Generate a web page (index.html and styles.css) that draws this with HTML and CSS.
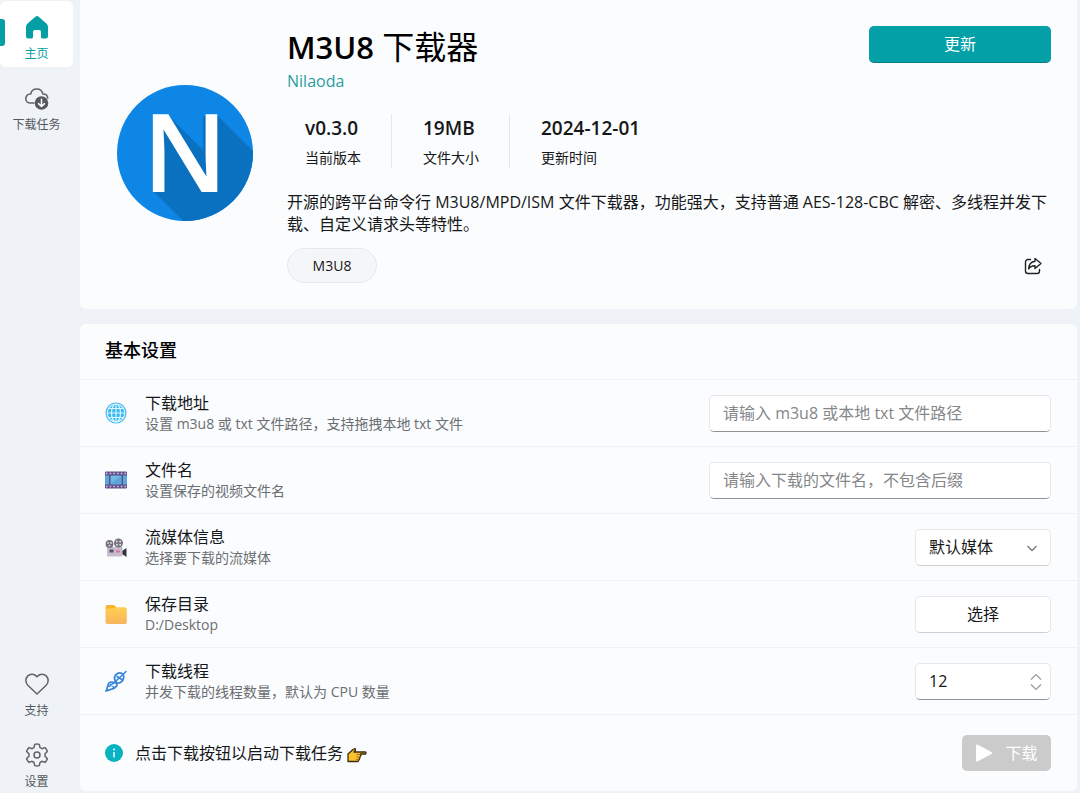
FILE: index.html
```html
<!DOCTYPE html>
<html lang="zh-CN">
<head>
<meta charset="utf-8">
<meta name="viewport" content="width=device-width, initial-scale=1">
<title>M3U8 下载器</title>
<link rel="stylesheet" href="styles.css">
</head>
<body>
<div class="app">
  <nav class="sidebar">
    <div class="nav-group">
      <a class="nav-item active" href="#home">
        <svg width="26" height="26" viewBox="0 0 26 26"><path d="M13 2 Q13.9 2 14.6 2.7 L22.4 9.6 Q24 11 24 13 V22 Q24 24.500 21.500 24.500 H18.500 Q17 24.500 17 23 V18 Q17 16 15 16 H11 Q9 16 9 18 V23 Q9 24.500 7.500 24.500 H4.500 Q2 24.500 2 22 V13 Q2 11 3.600 9.600 L11.400 2.700 Q12.100 2 13 2Z" fill="#049fa5"/></svg>
        <span>主页</span>
      </a>
      <a class="nav-item" href="#tasks">
        <svg width="26" height="26" viewBox="0 0 26 26" fill="none" stroke="#606368" stroke-width="1.600" stroke-linecap="round" stroke-linejoin="round"><path d="M10 18H6.500a4.500 4.500 0 0 1-.4-9h.5a6.300 6.300 0 0 1 12.300 0h.5a4.400 4.400 0 0 1 4.300 4"/><circle cx="17.500" cy="18" r="6.800" fill="#56595d" stroke="none"/><path d="M17.500 14.300v7.200M14.500 18.600l3 2.900 3-2.900" stroke="#fff" stroke-width="1.500"/></svg>
        <span>下载任务</span>
      </a>
    </div>
    <div class="nav-group bottom">
      <a class="nav-item" href="#support">
        <svg width="26" height="26" viewBox="0 0 26 26" fill="none" stroke="#606368" stroke-width="1.500" stroke-linejoin="round"><path d="M13 5.800C10.500 2.400 6.200 2.500 3.800 4.900c-2.700 2.700-2.500 6.700 0 9.300L13 23l9.200-8.800c2.500-2.600 2.700-6.600 0-9.300C19.800 2.500 15.500 2.400 13 5.800Z"/></svg>
        <span>支持</span>
      </a>
      <a class="nav-item" href="#settings">
        <svg width="26" height="26" viewBox="0 0 26 26" fill="none" stroke="#606368" stroke-width="1.500" stroke-linejoin="round"><path d="M10.700 2.400Q13 1.700 15.300 2.400L16 5.600Q17 6 17.900 6.700L21 5.600Q22.700 7.200 23.400 9.500L21 11.800Q21.200 13 21 14.200L23.400 16.500Q22.700 18.800 21 20.400L17.900 19.300Q17 20 16 20.400L15.300 23.600Q13 24.300 10.700 23.600L10 20.400Q9 20 8.100 19.300L5 20.400Q3.300 18.800 2.600 16.500L5 14.200Q4.800 13 5 11.800L2.600 9.500Q3.300 7.200 5 5.600L8.100 6.700Q9 6 10 5.600Z"/><circle cx="13" cy="13" r="3"/></svg>
        <span>设置</span>
      </a>
    </div>
  </nav>

  <main class="content">
    <section class="card hero">
      <svg class="logo" viewBox="0 0 136 136" role="img" aria-label="N">
        <defs><clipPath id="disc"><circle cx="68" cy="68" r="68"/></clipPath></defs>
        <circle cx="68" cy="68" r="68" fill="#0d86e6"/>
        <path clip-path="url(#disc)" d="M36 106H46V42L52 31 86 65V31H101L200 130V200H130Z" fill="#0a70c0"/>
        <text class="logo-letter" x="68" y="107" text-anchor="middle">N</text>
      </svg>
      <div class="hero-body">
        <div class="hero-top">
          <div>
            <h1><span class="latin">M3U8</span> 下载器</h1>
            <a class="author" href="#author">Nilaoda</a>
          </div>
          <button class="btn-primary" type="button">更新</button>
        </div>
        <dl class="stats">
          <div class="stat"><dd>v0.3.0</dd><dt>当前版本</dt></div>
          <div class="stat"><dd>19MB</dd><dt>文件大小</dt></div>
          <div class="stat"><dd>2024-12-01</dd><dt>更新时间</dt></div>
        </dl>
        <p class="desc">开源的跨平台命令行 M3U8/MPD/ISM 文件下载器，功能强大，支持普通 AES-128-CBC 解密、多线程并发下载、自定义请求头等特性。</p>
        <div class="hero-foot">
          <button class="tag" type="button">M3U8</button>
          <button class="share" type="button" aria-label="分享">
            <svg width="18" height="18" viewBox="0 0 18 18" fill="none" stroke="#222" stroke-width="1.400" stroke-linecap="round" stroke-linejoin="round"><path d="M6.500 2.500H4A2.500 2.500 0 0 0 1.500 5v9A2.500 2.500 0 0 0 4 16.500h9a2.500 2.500 0 0 0 2.500-2.500v-1.500"/><path d="M11 1.500 17 6.500 11 11.500V8.800C8 8.700 6 9.800 4.700 12 4.900 7.500 7.500 4.600 11 4.200Z"/></svg>
          </button>
        </div>
      </div>
    </section>

    <section class="card settings">
      <h2>基本设置</h2>
      <div class="row">
        <svg class="row-icon" viewBox="0 0 22 22"><circle cx="11" cy="11" r="10.500" fill="#3db7ee"/><g fill="none" stroke="#d9f5ff" stroke-width="1.200"><ellipse cx="11" cy="11" rx="4.500" ry="9"/><path d="M11 2v18M2 11h18M3.500 6.500h15M3.500 15.500h15"/><circle cx="11" cy="11" r="8.800"/></g></svg>
        <div class="row-text"><label for="url">下载地址</label><small>设置 m3u8 或 txt 文件路径，支持拖拽本地 txt 文件</small></div>
        <input class="field wide" id="url" type="text" placeholder="请输入 m3u8 或本地 txt 文件路径">
      </div>
      <div class="row">
        <svg class="row-icon" viewBox="0 0 22 22"><rect x="0" y="2.500" width="22" height="17" rx="1" fill="#63508c"/><path d="M0 6.500h4v9H0zM5.500 6.500h11v9h-11zM18 6.500h4v9h-4z" fill="#5ba7dc"/><path d="M6 7h10L6 14z" fill="#74b8e4"/><path d="M1 4.500h20M1 17.500h20" stroke="#d5cbe8" stroke-width="1.500" stroke-dasharray="1.500 2.200"/></svg>
        <div class="row-text"><label for="name">文件名</label><small>设置保存的视频文件名</small></div>
        <input class="field wide" id="name" type="text" placeholder="请输入下载的文件名，不包含后缀">
      </div>
      <div class="row">
        <svg class="row-icon" viewBox="0 0 22 22"><path d="M17 15l4.500-3v9L17 18z" fill="#37333e"/><rect x="2" y="11" width="15.500" height="9.500" rx="1" fill="#c5bccd"/><path d="M4.500 13.500h4v3h-4z" fill="#5a4f6b"/><path d="M11 14.500h4v2h-4z" fill="#e0709a"/><circle cx="4.500" cy="8" r="3.900" fill="#77717d"/><circle cx="13.500" cy="7" r="4.500" fill="#77717d"/><g fill="#dedbe1"><circle cx="3" cy="7" r=".9"/><circle cx="6" cy="7" r=".9"/><circle cx="4.500" cy="9.700" r=".9"/><circle cx="11.800" cy="5.500" r="1"/><circle cx="15.200" cy="5.500" r="1"/><circle cx="12" cy="8.800" r="1"/><circle cx="15.200" cy="8.800" r="1"/></g></svg>
        <div class="row-text"><label for="media">流媒体信息</label><small>选择要下载的流媒体</small></div>
        <div class="control">
          <select class="field" id="media"><option>默认媒体</option></select>
          <svg class="adorn" width="12" height="20" viewBox="0 0 12 20" fill="none" stroke="#777" stroke-width="1.300"><path d="M1.500 8 6 12.500 10.500 8"/></svg>
        </div>
      </div>
      <div class="row">
        <svg class="row-icon" viewBox="0 0 22 22"><defs><linearGradient id="fold" x1="0" y1="0" x2="0" y2="1"><stop offset="0" stop-color="#ffd24d"/><stop offset="1" stop-color="#f9b45f"/></linearGradient></defs><path d="M.5 4Q.5 2 2.500 2H8Q9 2 9.800 2.800L11.500 4.200H20Q21.800 4.200 21.800 6V19Q21.800 21 20 21H2.500Q.5 21 .5 19Z" fill="url(#fold)"/><path d="M1 3.500Q1.500 2 2.500 2H8Q9 2 9.800 2.800L11 4 8.500 5.500H1Z" fill="#f7b52c"/></svg>
        <div class="row-text"><label for="folder">保存目录</label><small>D:/Desktop</small></div>
        <button class="field pick" id="folder" type="button">选择</button>
      </div>
      <div class="row">
        <svg class="row-icon" viewBox="0 0 22 22" fill="none" stroke="#3a84d8" stroke-width="1.800" stroke-linecap="round"><path d="M1 21C3 18.500 2 14 4.500 12.500 8 10.500 11.500 15 15.500 12.500 19.500 10 19.500 5 17 3.500 14 2 10 4 9.500 7.500 9 11 13.500 13 11.500 16 9 20 4.500 19 1 21"/><path d="M4 16.500C7 14 9 13 11 11S15.500 7 21 1.500M12 6.500l5.500 3.500M5.500 14.500 9 17.500" stroke-width="1.500"/></svg>
        <div class="row-text"><label for="threads">下载线程</label><small>并发下载的线程数量，默认为 CPU 数量</small></div>
        <div class="control">
          <input class="field strong" id="threads" type="number" value="12" min="1">
          <svg class="adorn spin" width="12" height="20" viewBox="0 0 12 20" fill="none" stroke="#999" stroke-width="1.200"><path d="M1 7.500 6 2.500 11 7.500M1 12.500 6 17.500 11 12.500"/></svg>
        </div>
      </div>
      <div class="row last">
        <svg class="info" viewBox="0 0 18 18"><circle cx="9" cy="9" r="9" fill="#05b4c0"/><circle cx="9" cy="5.500" r="1" fill="#fff"/><path d="M9 8v5.500" stroke="#fff" stroke-width="1.400"/></svg>
        <p class="tip">点击下载按钮以启动下载任务
          <svg class="hand" width="20" height="16" viewBox="0 0 20 16"><path d="M1 14.500V7L6 2.500 8 1.500 8.500 3 7 5H18.500Q19.500 6 18.500 7H13.500L14 8.500 13 10 12.500 12 11 14.500Z" fill="#fcc12b" stroke="#3a2c12" stroke-width="1.300" stroke-linejoin="round"/><path d="M9.500 7.500h4M9.500 10H13M9 12.300h3" stroke="#8a5d12" stroke-width=".8"/></svg>
        </p>
        <button class="download" type="button" disabled>
          <svg width="18" height="20" viewBox="0 0 18 20"><path d="M2 2.500V17.500L16 10Z" fill="#fff" stroke="#fff" stroke-width="2" stroke-linejoin="round"/></svg>
          <span>下载</span>
        </button>
      </div>
    </section>
  </main>
</div>
</body>
</html>
```
FILE: styles.css
```css
* {
  box-sizing: border-box;
}

body {
  margin: 0;
  background: #eff3f8;
  color: #161718;
  font-family: "Open Sans", "Noto Sans CJK SC", sans-serif;
  font-size: 16px;
  line-height: 22px;
}

button,
input,
select {
  font: inherit;
  color: inherit;
}

h1,
h2,
p,
dl,
dd {
  margin: 0;
}

a {
  text-decoration: none;
}

.app {
  display: flex;
  min-height: 100vh;
}

.sidebar {
  flex: 0 0 80px;
  display: flex;
  flex-direction: column;
  justify-content: space-between;
  padding: 1px 7px 0 0;
}

.nav-group {
  display: flex;
  flex-direction: column;
  gap: 5px;
}

.nav-item {
  position: relative;
  display: flex;
  flex-direction: column;
  align-items: center;
  gap: 4px;
  height: 66px;
  padding-top: 13px;
  border-radius: 6px;
  color: #55585c;
  font-size: 12px;
  line-height: 20px;
}

.nav-group.bottom {
  gap: 7px;
}

.bottom .nav-item {
  height: 64px;
}

.nav-item.active {
  background: #fff;
  color: #049fa5;
}

.nav-item.active::before {
  content: "";
  position: absolute;
  left: 0;
  top: 18px;
  width: 5px;
  height: 27px;
  border-radius: 0 3px 3px 0;
  background: #049fa5;
}

.content {
  flex: 1;
  min-width: 0;
  display: flex;
  flex-direction: column;
  gap: 15px;
  padding: 0 3px 2px 0;
}

.card {
  background: #fafcfe;
  border-radius: 6px;
}

.hero {
  display: flex;
  align-items: center;
  gap: 34px;
  padding: 26px 26px 26px 37px;
  border-radius: 0 0 6px 6px;
}

.logo {
  flex: none;
  width: 136px;
  height: 136px;
  margin-bottom: 4px;
  overflow: visible;
}

.logo-letter {
  font: 600 108px "Open Sans", sans-serif;
  fill: #fff;
}

.hero-body {
  flex: 1;
  min-width: 0;
}

.hero-top {
  display: flex;
  justify-content: space-between;
  align-items: flex-start;
}

h1 {
  color: #000;
  font-size: 32px;
  font-weight: 400;
  line-height: 41px;
}

.latin {
  font-size: 31px;
  font-weight: 600;
}

.author {
  display: block;
  color: #2b9c9f;
  line-height: 26px;
}

.btn-primary {
  width: 182px;
  height: 37px;
  border: 0;
  border-bottom: 1px solid #067f86;
  border-radius: 5px;
  background: #03a0a8;
  color: #fff;
}

.stats {
  display: flex;
  margin-top: 20px;
}

.stat {
  display: flex;
  flex-direction: column;
  gap: 5px;
  height: 54px;
  padding: 0 30px 0 31px;
  border-left: 1px solid #e5e8ea;
}

.stat:first-child {
  padding-left: 18px;
  border-left: 0;
}

.stat dd {
  font-size: 19px;
  font-weight: 600;
  line-height: 29px;
}

.stat dt {
  font-size: 14px;
  line-height: 20px;
}

.desc {
  margin-top: 23px;
}

.hero-foot {
  display: flex;
  justify-content: space-between;
  align-items: center;
  margin-top: 13px;
  padding-right: 9px;
}

.tag {
  width: 90px;
  height: 35px;
  border: 1px solid #e6e8ea;
  border-radius: 18px;
  background: #f5f6f7;
  font-size: 14px;
}

.share {
  display: flex;
  padding: 0;
  border: 0;
  background: none;
}

h2 {
  padding: 15px 25px 18px;
  color: #000;
  font-size: 18px;
  font-weight: 500;
  line-height: 22px;
}

.settings {
  flex: 1;
}

.row {
  display: flex;
  align-items: center;
  min-height: 67px;
  padding: 0 26px 0 25px;
  border-top: 1px solid #eff1f4;
}

.row.last {
  min-height: 76px;
}

.row-icon {
  flex: none;
  width: 22px;
  height: 22px;
  margin-right: 18px;
}

.row-text {
  flex: 1;
  display: flex;
  flex-direction: column;
}

.row-text small {
  color: #6b6e71;
  font-size: 14px;
  line-height: 20px;
}

.field {
  width: 136px;
  height: 37px;
  padding: 0 13px;
  border: 1px solid #e6e8eb;
  border-bottom-color: #cdd0d3;
  border-radius: 5px;
  background: #fff;
  appearance: none;
  outline-color: #049fa5;
}

.field.wide {
  width: 342px;
  border-bottom-color: #909396;
}

.field.strong {
  border-bottom-color: #909396;
  appearance: textfield;
}

.field::placeholder {
  color: #85878a;
  opacity: 1;
}

.field::-webkit-inner-spin-button {
  appearance: none;
}

.control {
  position: relative;
  display: flex;
}

.adorn {
  position: absolute;
  right: 13px;
  top: 9px;
  pointer-events: none;
}

.adorn.spin {
  right: 9px;
}

.info {
  flex: none;
  width: 18px;
  height: 18px;
  margin-right: 12px;
}

.tip {
  flex: 1;
}

.hand {
  vertical-align: -4px;
}

.download {
  display: flex;
  align-items: center;
  justify-content: center;
  gap: 12px;
  width: 89px;
  height: 36px;
  padding: 0;
  border: 0;
  border-radius: 5px;
  background: #cbcbcb;
  color: #fff;
}
```
